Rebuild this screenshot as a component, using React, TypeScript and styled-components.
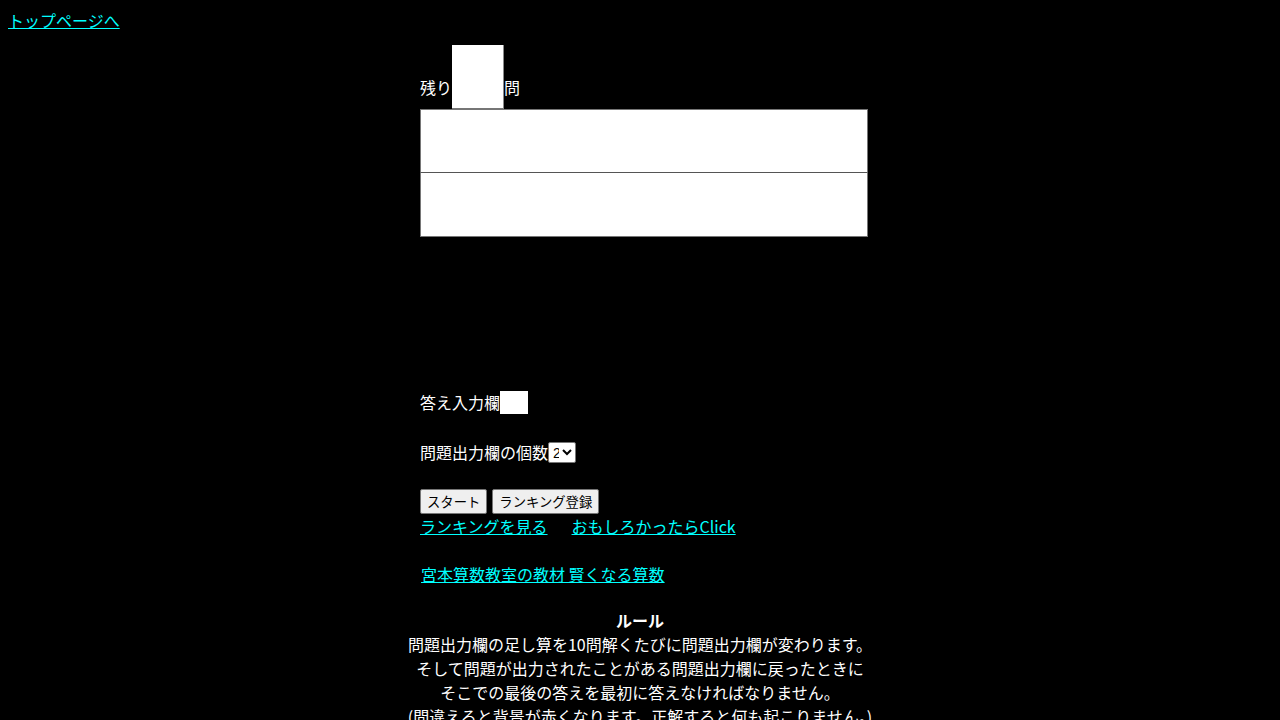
import styled, { createGlobalStyle } from 'styled-components'

const GlobalStyle = createGlobalStyle`
    html, body {
        background: #000;
    }
    body {
        margin: 8px;
        color: #fff;
        font-family: "Noto Sans CJK JP", "Noto Sans", sans-serif;
        font-size: 16px;
        line-height: 24px;
    }
`

const TopLink = styled.a`
    display: inline-block;
    color: #00ffff;
    text-decoration: underline;
`

const Game = styled.div`
    width: 440px;
    margin: 13px auto 0;
    display: flex;
    flex-direction: column;
    align-items: flex-start;
`

const Row = styled.div<{ $top?: number }>`
    display: flex;
    align-items: flex-end;
    margin-top: ${props => props.$top || 0}px;
    white-space: nowrap;
`

const Label = styled.span<{ $lift?: number }>`
    margin-bottom: ${props => props.$lift || 0}px;
`

const CountBox = styled.div`
    width: 52px;
    height: 64px;
    box-sizing: border-box;
    background: #fff;
    border-right: 1px solid #8a8a8a;
    border-bottom: 1px solid #767676;
`

const Problems = styled.div`
    display: flex;
    flex-direction: column;
`

const ProblemBox = styled.div`
    width: 448px;
    height: 64px;
    box-sizing: border-box;
    background: #fff;
    border: 1px solid #767676;
    & + & {
        border-top: none;
    }
    &:first-of-type {
        border-bottom: 1px solid #555;
    }
`

const AnswerInput = styled.input`
    width: 28px;
    height: 23px;
    box-sizing: border-box;
    border: none;
    padding: 0;
    background: #fff;
    outline: none;
`

const CountSelect = styled.select`
    width: 28px;
    height: 21px;
    box-sizing: border-box;
    margin-bottom: 1px;
    padding: 0;
    border: 1px solid #767676;
    border-radius: 2px;
    background: #fff;
    color: #000;
    font-family: "Liberation Sans", sans-serif;
    font-size: 14px;
    line-height: 17px;
`

const Buttons = styled.div`
    display: flex;
    gap: 5px;
    margin-top: 25px;
`

const Button = styled.button`
    height: 25px;
    padding: 0 6px;
    border: 1px solid #767676;
    border-radius: 2px;
    background: #efefef;
    color: #000;
    font-family: "Noto Sans CJK JP", sans-serif;
    font-size: 13.33px;
    line-height: 19px;
`

const LinkRow = styled.div<{ $top?: number; $indent?: number }>`
    display: flex;
    gap: 24px;
    margin-top: ${props => props.$top || 0}px;
    padding-left: ${props => props.$indent || 0}px;
`

const TextLink = styled.a`
    color: #00ffff;
    text-decoration: underline;
`

const Rules = styled.div`
    margin-top: 22px;
    text-align: center;
`

const RuleTitle = styled.div`
    font-weight: 700;
`

const App = () => {
    return (
        <>
            <GlobalStyle />
            <TopLink href="#">トップページへ</TopLink>
            <Game>
                <Row>
                    <Label $lift={10}>残り</Label>
                    <CountBox />
                    <Label $lift={10}>問</Label>
                </Row>
                <Problems>
                    <ProblemBox />
                    <ProblemBox />
                </Problems>
                <Row $top={153}>
                    <Label>答え入力欄</Label>
                    <AnswerInput type="text" />
                </Row>
                <Row $top={26}>
                    <Label>問題出力欄の個数</Label>
                    <CountSelect defaultValue="2">
                        <option value="1">1</option>
                        <option value="2">2</option>
                        <option value="3">3</option>
                        <option value="4">4</option>
                        <option value="5">5</option>
                    </CountSelect>
                </Row>
                <Buttons>
                    <Button>スタート</Button>
                    <Button>ランキング登録</Button>
                </Buttons>
                <LinkRow>
                    <TextLink href="#">ランキングを見る</TextLink>
                    <TextLink href="#">おもしろかったらClick</TextLink>
                </LinkRow>
                <LinkRow $top={24} $indent={1}>
                    <TextLink href="#">宮本算数教室の教材 賢くなる算数</TextLink>
                </LinkRow>
            </Game>
            <Rules>
                <RuleTitle>ルール</RuleTitle>
                <div>問題出力欄の足し算を10問解くたびに問題出力欄が変わります。</div>
                <div>そして問題が出力されたことがある問題出力欄に戻ったときに</div>
                <div>そこでの最後の答えを最初に答えなければなりません。</div>
                <div>(間違えると背景が赤くなります。正解すると何も起こりません。)</div>
            </Rules>
        </>
    )
}

export default App
